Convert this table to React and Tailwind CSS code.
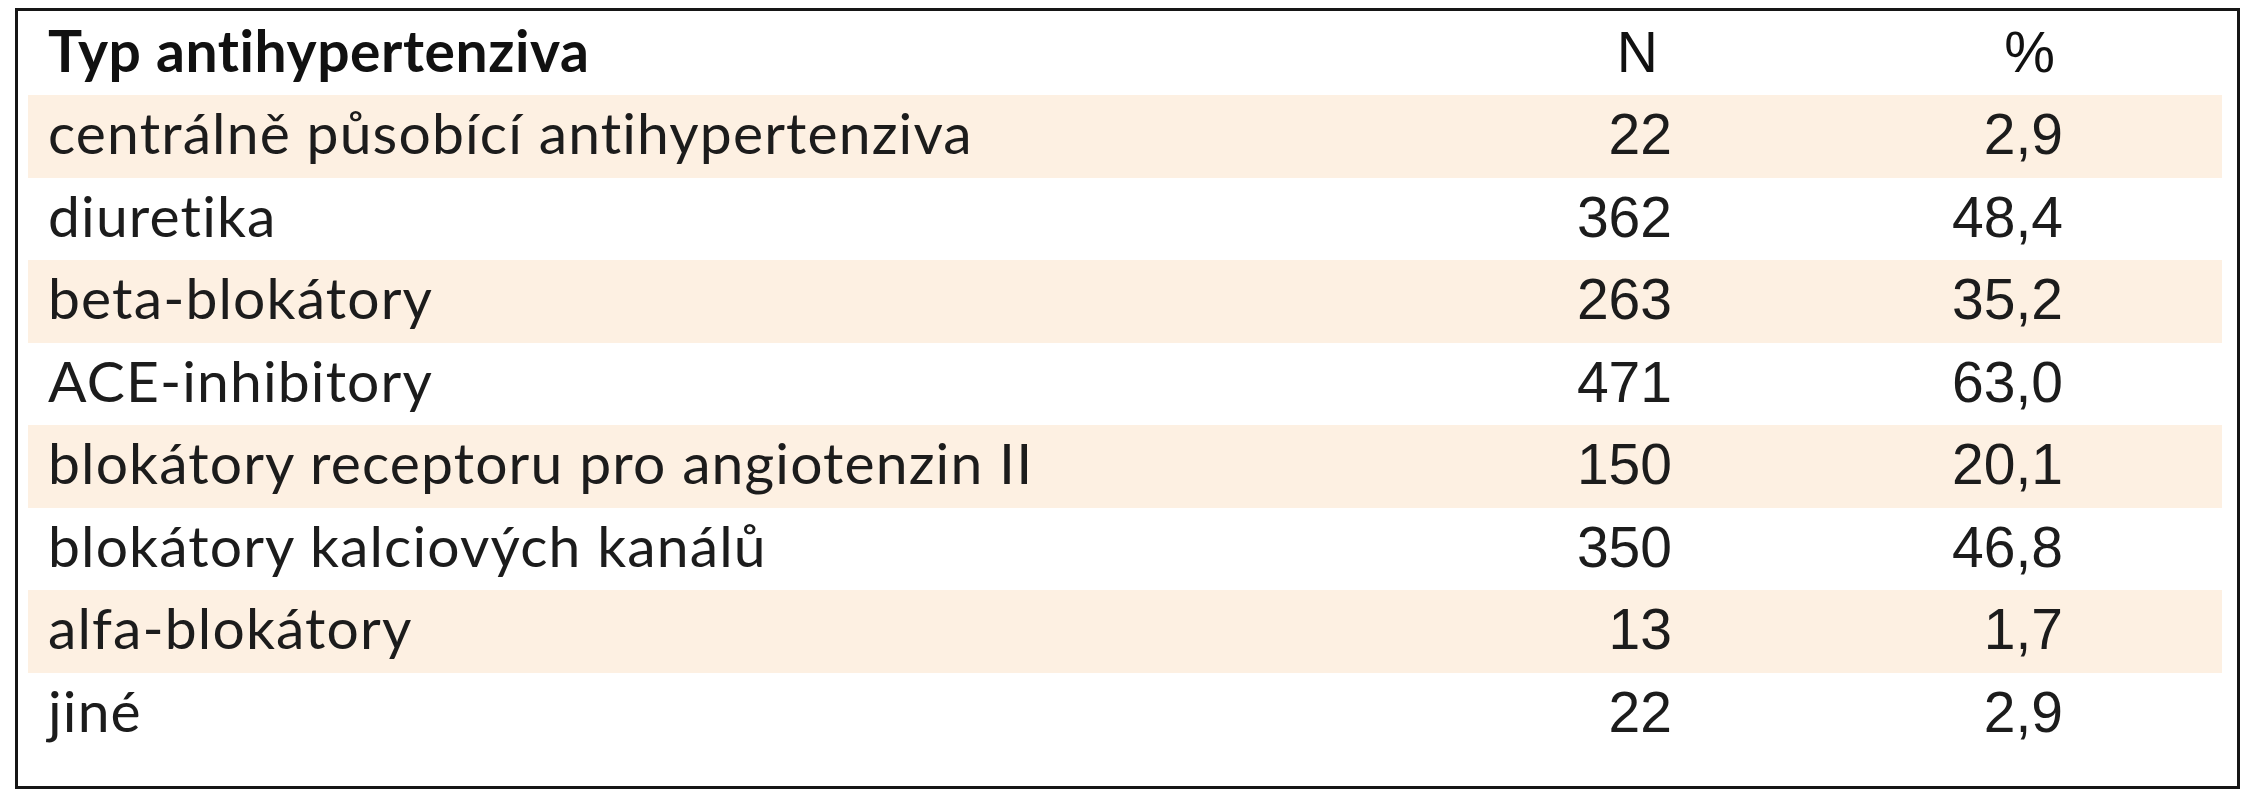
import React from 'react';

// Typ antihypertenziva – počty a podíly
const rows = [
  { label: 'centrálně působící antihypertenziva', n: '22', pct: '2,9' },
  { label: 'diuretika', n: '362', pct: '48,4' },
  { label: 'beta-blokátory', n: '263', pct: '35,2' },
  { label: 'ACE-inhibitory', n: '471', pct: '63,0' },
  { label: 'blokátory receptoru pro angiotenzin II', n: '150', pct: '20,1' },
  { label: 'blokátory kalciových kanálů', n: '350', pct: '46,8' },
  { label: 'alfa-blokátory', n: '13', pct: '1,7' },
  { label: 'jiné', n: '22', pct: '2,9' },
];

const App = () => {
  return (
    <div className="min-h-screen bg-white pt-[8px] pl-[15px]">
      <div className="w-[2225px] h-[781px] border-[3px] border-[#161616] pl-[10px] pr-[15px] pb-[31px] text-[#1c1c1c]">
        {/* Hlavička */}
        <div className="grid grid-cols-[1fr_182px_391px] items-baseline h-[84px] pt-[11px] pl-[20px] pr-[159px] leading-[57px]">
          <span className="font-['Lato','DejaVu_Sans',sans-serif] font-bold text-[57px] tracking-[0.01em] text-[#111]">
            Typ antihypertenziva
          </span>
          <span className="font-['Liberation_Sans',Arial,sans-serif] text-[57px] text-right pr-[14px] text-[#111]">
            N
          </span>
          <span className="font-['Liberation_Sans',Arial,sans-serif] text-[57px] text-right pr-[8px] text-[#111]">
            %
          </span>
        </div>

        {/* Řádky */}
        {rows.map((row, i) => (
          <div
            key={row.label}
            className={`grid grid-cols-[1fr_182px_391px] items-baseline h-[82.5px] pt-[9px] pl-[20px] pr-[159px] leading-[57px] ${
              i % 2 === 0 ? 'bg-[#fdf0e2]' : 'bg-white'
            }`}
          >
            <span className="font-['Lato','DejaVu_Sans',sans-serif] text-[57px] tracking-[0.02em]">
              {row.label}
            </span>
            <span className="font-['Liberation_Sans',Arial,sans-serif] text-[57px] text-right">
              {row.n}
            </span>
            <span className="font-['Liberation_Sans',Arial,sans-serif] text-[57px] text-right">
              {row.pct}
            </span>
          </div>
        ))}
      </div>
    </div>
  );
};

export default App;
